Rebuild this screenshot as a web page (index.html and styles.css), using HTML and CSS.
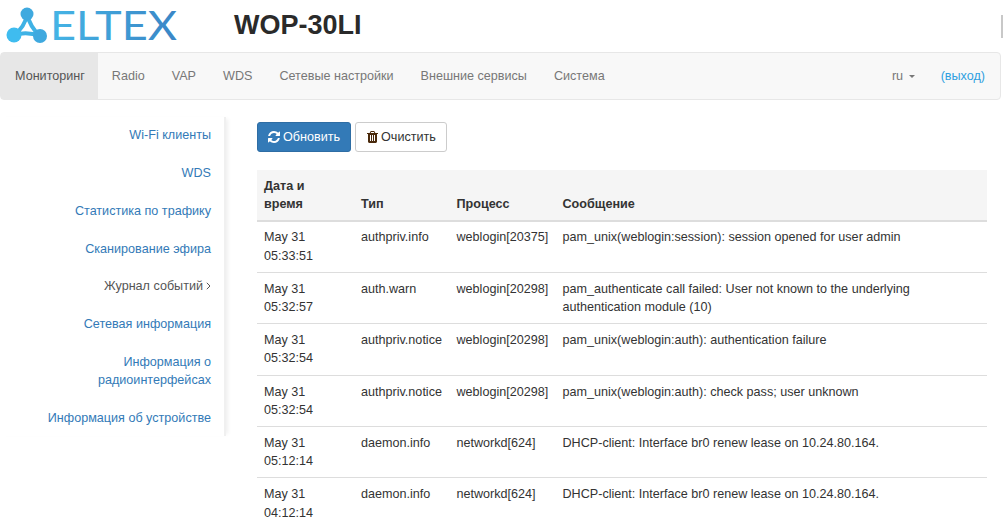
FILE: index.html
```html
<!DOCTYPE html>
<html lang="ru">
<head>
<meta charset="utf-8">
<title>WOP-30LI</title>
<link rel="stylesheet" href="styles.css">
</head>
<body>
<header class="brand">
  <svg class="logo" width="190" height="46" viewBox="0 0 190 46" aria-label="ELTEX">
    <defs>
      <linearGradient id="lg" x1="0" x2="1" y1="0" y2="0">
        <stop offset="0" stop-color="#45b5e6"/>
        <stop offset="1" stop-color="#3a86c6"/>
      </linearGradient>
    </defs>
    <path d="M27 11 Q25 24 14 32 Q27 28 40 33 Q30 24 27 11 Z" fill="none" stroke="#3fb2e5" stroke-width="4" stroke-linejoin="round"/>
    <circle cx="27" cy="11" r="6.5" fill="#3fa9df"/>
    <circle cx="14" cy="32" r="7.5" fill="#3fbcef"/>
    <circle cx="40" cy="33" r="7" fill="#3fa9df"/>
    <text class="logo-text" x="50" y="37" textLength="127" lengthAdjust="spacingAndGlyphs" fill="url(#lg)">ELTEX</text>
  </svg>
  <h1 class="model">WOP-30LI</h1>
</header>
<nav class="navbar">
  <ul class="nav">
    <li class="active"><a href="#">Мониторинг</a></li>
    <li><a href="#">Radio</a></li>
    <li><a href="#">VAP</a></li>
    <li><a href="#">WDS</a></li>
    <li><a href="#">Сетевые настройки</a></li>
    <li><a href="#">Внешние сервисы</a></li>
    <li><a href="#">Система</a></li>
  </ul>
  <div class="nav-right">
    <a class="lang" href="#">ru <span class="caret"></span></a>
    <a class="logout" href="#">(выход)</a>
  </div>
</nav>
<div class="layout">
  <aside class="side">
    <a href="#">Wi-Fi клиенты</a>
    <a href="#">WDS</a>
    <a href="#">Статистика по трафику</a>
    <a href="#">Сканирование эфира</a>
    <a class="current" href="#">Журнал событий<svg class="chev" width="5" height="8" viewBox="0 0 5 8"><path d="M.8.8 4 4 .8 7.2" fill="none" stroke="#555" stroke-width="1"/></svg></a>
    <a href="#">Сетевая информация</a>
    <a href="#">Информация о радиоинтерфейсах</a>
    <a href="#">Информация об устройстве</a>
  </aside>
  <main class="content">
    <div class="toolbar">
      <button class="btn primary"><svg class="ico" width="12" height="12" viewBox="0 0 1536 1536"><path fill="#fff" d="M1511 928q0 5-1 7-64 268-268 434.500T764 1536q-146 0-282.500-55T238 1324l-129 129q-19 19-45 19t-45-19-19-45V960q0-26 19-45t45-19h448q26 0 45 19t19 45-19 45l-137 137q71 66 161 102t187 36q134 0 250-65t186-179q11-17 53-117 8-23 30-23h192q13 0 22.500 9.500t9.500 22.500zm25-800v448q0 26-19 45t-45 19h-448q-26 0-45-19t-19-45 19-45l138-138Q969 256 768 256q-134 0-250 65T332 500q-11 17-53 117-8 23-30 23H50q-13 0-22.500-9.500T18 608v-7q65-268 270-434.500T768 0q146 0 284 55.500T1297 212l130-129q19-19 45-19t45 19 19 45z"/></svg> Обновить</button>
      <button class="btn clear"><svg class="ico" width="11" height="12" viewBox="0 0 1408 1536"><path fill="#4a2a0c" d="M512 1248V544q0-14-9-23t-23-9h-64q-14 0-23 9t-9 23v704q0 14 9 23t23 9h64q14 0 23-9t9-23zm256 0V544q0-14-9-23t-23-9h-64q-14 0-23 9t-9 23v704q0 14 9 23t23 9h64q14 0 23-9t9-23zm256 0V544q0-14-9-23t-23-9h-64q-14 0-23 9t-9 23v704q0 14 9 23t23 9h64q14 0 23-9t9-23zM480 256h448l-48-117q-7-9-17-11H546q-10 2-17 11zm928 32v64q0 14-9 23t-23 9h-96v948q0 83-47 143.500t-113 60.500H288q-66 0-113-58.500T128 1336V384H32q-14 0-23-9t-9-23v-64q0-14 9-23t23-9h309l70-167q15-37 54-63t79-26h320q40 0 79 26t54 63l70 167h309q14 0 23 9t9 23z"/></svg> Очистить</button>
    </div>
    <table class="log">
      <thead>
        <tr><th class="c-date">Дата и время</th><th class="c-type">Тип</th><th class="c-proc">Процесс</th><th>Сообщение</th></tr>
      </thead>
      <tbody>
        <tr><td>May 31 05:33:51</td><td>authpriv.info</td><td>weblogin[20375]</td><td>pam_unix(weblogin:session): session opened for user admin</td></tr>
        <tr><td>May 31 05:32:57</td><td>auth.warn</td><td>weblogin[20298]</td><td>pam_authenticate call failed: User not known to the underlying authentication module (10)</td></tr>
        <tr><td>May 31 05:32:54</td><td>authpriv.notice</td><td>weblogin[20298]</td><td>pam_unix(weblogin:auth): authentication failure</td></tr>
        <tr><td>May 31 05:32:54</td><td>authpriv.notice</td><td>weblogin[20298]</td><td>pam_unix(weblogin:auth): check pass; user unknown</td></tr>
        <tr><td>May 31 05:12:14</td><td>daemon.info</td><td>networkd[624]</td><td>DHCP-client: Interface br0 renew lease on 10.24.80.164.</td></tr>
        <tr><td>May 31 04:12:14</td><td>daemon.info</td><td>networkd[624]</td><td>DHCP-client: Interface br0 renew lease on 10.24.80.164.</td></tr>
      </tbody>
    </table>
  </main>
</div>
<div class="scroll-thumb"></div>
</body>
</html>
```
FILE: styles.css
```css
* { box-sizing: border-box; }
html, body { height: 529px; overflow: hidden; }
body {
  margin: 0;
  background: #fff;
  color: #333;
  font: 12.6px/18.2px "Liberation Sans", Arial, sans-serif;
}
a { text-decoration: none; color: #337ab7; }
.brand { height: 52px; display: flex; align-items: flex-start; }
.logo { margin-top: 3px; flex: none; width: 190px; overflow: visible; }
.logo-text { font: 400 40px "Lato", "Liberation Sans", sans-serif; }
.model {
  margin: 10px 0 0 44px;
  font-size: 27px;
  line-height: 31px;
  font-weight: 700;
  color: #2a2a2a;
}
.navbar {
  height: 48px;
  margin-right: 2px;
  display: flex;
  justify-content: space-between;
  background: #f8f8f8;
  border: 1px solid #e7e7e7;
  border-radius: 4px;
}
.nav { display: flex; margin: 0; padding: 0; list-style: none; }
.nav a {
  display: block;
  height: 46px;
  padding: 14px 13.5px;
  color: #777;
}
.nav li:first-child a { padding-left: 14px; }
.nav .active a { background: #e7e7e7; color: #555; }
.nav-right { display: flex; padding-top: 14px; padding-right: 15px; gap: 26px; }
.lang { color: #777; }
.logout { color: #2f9fe0; }
.caret {
  display: inline-block;
  margin-left: 2px;
  vertical-align: middle;
  border-top: 3.5px solid #777;
  border-left: 3.5px solid transparent;
  border-right: 3.5px solid transparent;
}
.layout { display: flex; padding-top: 17px; }
.side {
  width: 226px;
  flex: none;
  height: 319px;
  padding: 9.2px 13px 0 30px;
  text-align: right;
  border-right: 2px solid #f0f0f0;
  box-shadow: 4px 0 4px -2px #f0f0f0;
  display: flex;
  flex-direction: column;
  gap: 19.6px;
}
.side a { color: #337ab7; display: block; }
.side .current { color: #555; }
.chev { margin-left: 3px; }
.content { margin-left: 31px; width: 730px; padding-top: 5px; flex: none; }
.toolbar { display: flex; gap: 4px; margin-bottom: 18px; }
.btn {
  height: 30px;
  padding: 0 10px;
  font: inherit;
  color: #333;
  background: #fff;
  border: 1px solid #ccc;
  border-radius: 3px;
  display: flex;
  align-items: center;
  gap: 3px;
}
.btn.clear { padding: 0 10.5px 0 11px; }
.btn.primary { background: #337ab7; border-color: #2e6da4; color: #fff; }
.log { width: 100%; border-collapse: collapse; table-layout: fixed; }
.log th, .log td { padding: 7px; text-align: left; vertical-align: top; }
.log th { vertical-align: bottom; background: #f5f5f5; border-bottom: 2px solid #ddd; font-weight: 700; }
.log th.c-date { padding-right: 30px; }
.log td { border-top: 1px solid #ddd; }
.log thead + tbody tr:first-child td { border-top: 0; padding-top: 6px; }
.c-date { width: 97px; }
.c-type { width: 95.5px; }
.c-proc { width: 106px; }
.scroll-thumb {
  position: absolute;
  top: 15px;
  right: 0;
  width: 2px;
  height: 23px;
  background: #c8c8c8;
}
```
